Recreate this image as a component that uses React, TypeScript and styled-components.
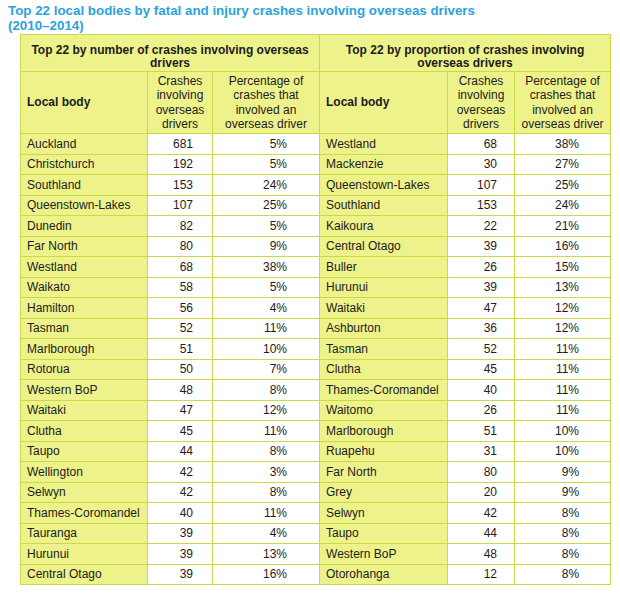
import React from "react";
import styled, { createGlobalStyle } from "styled-components";

const Global = createGlobalStyle`
  html, body { margin: 0; padding: 0; background: #ffffff; }
  body { font-family: "Liberation Sans", Arial, sans-serif; color: #1c1c1c; }
`;

const Page = styled.div`
  width: 620px;
  height: 595px;
  box-sizing: border-box;
  padding: 3px 0 0 8px;
  overflow: hidden;
`;

const Title = styled.h1`
  margin: 0;
  font-size: 13.35px;
  line-height: 15px;
  font-weight: 700;
  color: #2ba3da;
`;

const Wrap = styled.div`
  padding: 1px 0 0 12px;
`;

const Table = styled.table`
  border-collapse: collapse;
  table-layout: fixed;
  width: 590px;
  font-size: 12px;
  border: 1.5px solid #cbd944;
`;

const HeadCell = styled.th<{ $align?: string; $valign?: string }>`
  background: #edf28b;
  border: 1px solid #cbd944;
  font-weight: 700;
  text-align: ${(p) => p.$align || "center"};
  vertical-align: ${(p) => p.$valign || "middle"};
  padding: 0 6px;
`;

const GroupCell = styled(HeadCell)`
  height: 35px;
  line-height: 13px;
  vertical-align: bottom;
  padding: 0 8px 1px;
  font-size: 12px;
`;

const SubCell = styled(HeadCell)<{ $bold?: boolean }>`
  height: 61px;
  line-height: 14.5px;
  font-weight: ${(p) => (p.$bold ? 700 : 400)};
  padding: 0 2px;
`;

const LocalHead = styled(SubCell)`
  padding-left: 6px;
`;

const Cell = styled.td<{ $name?: boolean; $pad?: number }>`
  height: 19.5px;
  padding: 0 ${(p) => (p.$name ? 0 : p.$pad ?? 18)}px 0 ${(p) => (p.$name ? 6 : 0)}px;
  border: 1px solid #cbd944;
  background: ${(p) => (p.$name ? "#edf28b" : "#ffffff")};
  text-align: ${(p) => (p.$name ? "left" : "right")};
  vertical-align: middle;
  line-height: 14px;
  white-space: nowrap;
`;

const left: [string, number, string][] = [
  ["Auckland", 681, "5%"],
  ["Christchurch", 192, "5%"],
  ["Southland", 153, "24%"],
  ["Queenstown-Lakes", 107, "25%"],
  ["Dunedin", 82, "5%"],
  ["Far North", 80, "9%"],
  ["Westland", 68, "38%"],
  ["Waikato", 58, "5%"],
  ["Hamilton", 56, "4%"],
  ["Tasman", 52, "11%"],
  ["Marlborough", 51, "10%"],
  ["Rotorua", 50, "7%"],
  ["Western BoP", 48, "8%"],
  ["Waitaki", 47, "12%"],
  ["Clutha", 45, "11%"],
  ["Taupo", 44, "8%"],
  ["Wellington", 42, "3%"],
  ["Selwyn", 42, "8%"],
  ["Thames-Coromandel", 40, "11%"],
  ["Tauranga", 39, "4%"],
  ["Hurunui", 39, "13%"],
  ["Central Otago", 39, "16%"],
];

const right: [string, number, string][] = [
  ["Westland", 68, "38%"],
  ["Mackenzie", 30, "27%"],
  ["Queenstown-Lakes", 107, "25%"],
  ["Southland", 153, "24%"],
  ["Kaikoura", 22, "21%"],
  ["Central Otago", 39, "16%"],
  ["Buller", 26, "15%"],
  ["Hurunui", 39, "13%"],
  ["Waitaki", 47, "12%"],
  ["Ashburton", 36, "12%"],
  ["Tasman", 52, "11%"],
  ["Clutha", 45, "11%"],
  ["Thames-Coromandel", 40, "11%"],
  ["Waitomo", 26, "11%"],
  ["Marlborough", 51, "10%"],
  ["Ruapehu", 31, "10%"],
  ["Far North", 80, "9%"],
  ["Grey", 20, "9%"],
  ["Selwyn", 42, "8%"],
  ["Taupo", 44, "8%"],
  ["Western BoP", 48, "8%"],
  ["Otorohanga", 12, "8%"],
];

const widths = [127, 65, 107, 128, 67, 96];

export default function App() {
  return (
    <Page>
      <Global />
      <Title>
        Top 22 local bodies by fatal and injury crashes involving overseas drivers
        <br />
        (2010–2014)
      </Title>
      <Wrap>
        <Table>
          <colgroup>
            {widths.map((w, i) => (
              <col key={i} style={{ width: w }} />
            ))}
          </colgroup>
          <thead>
            <tr>
              <GroupCell colSpan={3}>
                Top 22 by number of crashes involving overseas drivers
              </GroupCell>
              <GroupCell colSpan={3}>
                Top 22 by proportion of crashes involving overseas drivers
              </GroupCell>
            </tr>
            <tr>
              <LocalHead $align="left" $bold>Local body</LocalHead>
              <SubCell>Crashes involving overseas drivers</SubCell>
              <SubCell>Percentage of crashes that involved an overseas driver</SubCell>
              <LocalHead $align="left" $bold>Local body</LocalHead>
              <SubCell>Crashes involving overseas drivers</SubCell>
              <SubCell>Percentage of crashes that involved an overseas driver</SubCell>
            </tr>
          </thead>
          <tbody>
            {left.map((l, i) => {
              const r = right[i];
              return (
                <tr key={i}>
                  <Cell $name>{l[0]}</Cell>
                  <Cell $pad={19}>{l[1]}</Cell>
                  <Cell $pad={32}>{l[2]}</Cell>
                  <Cell $name>{r[0]}</Cell>
                  <Cell $pad={17}>{r[1]}</Cell>
                  <Cell $pad={31}>{r[2]}</Cell>
                </tr>
              );
            })}
          </tbody>
        </Table>
      </Wrap>
    </Page>
  );
}
